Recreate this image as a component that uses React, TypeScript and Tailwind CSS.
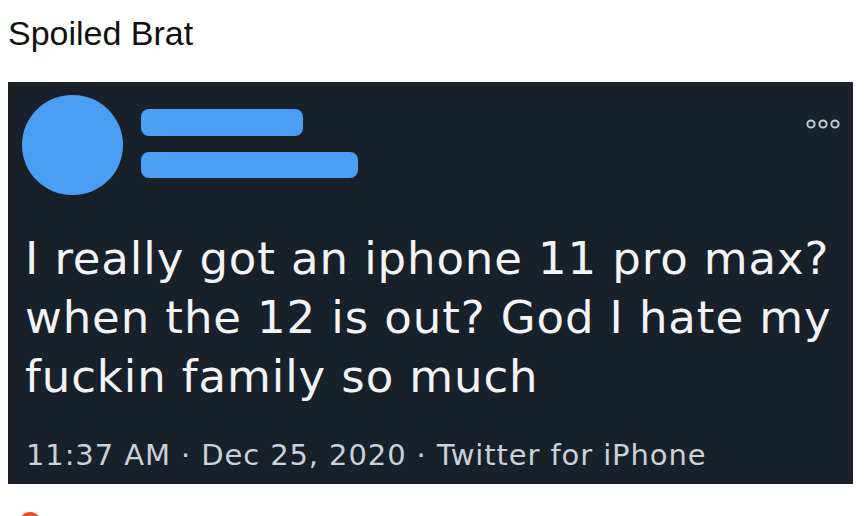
export default function App() {
  return (
    <div className="relative h-[516px] w-[868px] overflow-hidden bg-white">
      <h1 className="pl-[8px] pt-[14px] font-[family-name:'Liberation_Sans',sans-serif] text-[34px] font-normal leading-[38px] text-[#111]">
        Spoiled Brat
      </h1>
      <div className="ml-[8px] mt-[30px] h-[402px] w-[845px] bg-[#18202a]">
        <div className="flex items-start">
          <div className="ml-[14px] mt-[13px] h-[100px] w-[101px] rounded-full bg-[#4a9ff5]" />
          <div className="ml-[18px] mt-[27px] flex flex-col gap-[16px]">
            <div className="h-[27px] w-[162px] rounded-[8px] bg-[#4a9ff5]" />
            <div className="h-[26px] w-[217px] rounded-[8px] bg-[#4a9ff5]" />
          </div>
          <svg className="ml-auto mr-[13px] mt-[37px]" width="34" height="10" viewBox="0 0 34 10">
            <circle cx="5" cy="5" r="3.6" fill="none" stroke="#c5cbd2" strokeWidth="2" />
            <circle cx="17" cy="5" r="3.6" fill="none" stroke="#c5cbd2" strokeWidth="2" />
            <circle cx="29" cy="5" r="3.6" fill="none" stroke="#c5cbd2" strokeWidth="2" />
          </svg>
        </div>
        <p className="ml-[17px] mt-[34px] font-[family-name:'DejaVu_Sans',sans-serif] text-[45px] leading-[59px] tracking-[0.9px] text-[#f2f3f5]">
          I really got an iphone 11 pro max?
          <br />
          when the 12 is out? God I hate my
          <br />
          fuckin family so much
        </p>
        <p className="ml-[18px] mt-[29px] font-[family-name:'DejaVu_Sans',sans-serif] text-[29px] leading-[40px] tracking-[0.9px] text-[#c9d1d9]">
          11:37 AM · Dec 25, 2020 · Twitter for iPhone
        </p>
      </div>
      <div className="absolute left-[19px] top-[512px] h-[22px] w-[22px] rounded-full bg-[#e2532d]" />
    </div>
  );
}
